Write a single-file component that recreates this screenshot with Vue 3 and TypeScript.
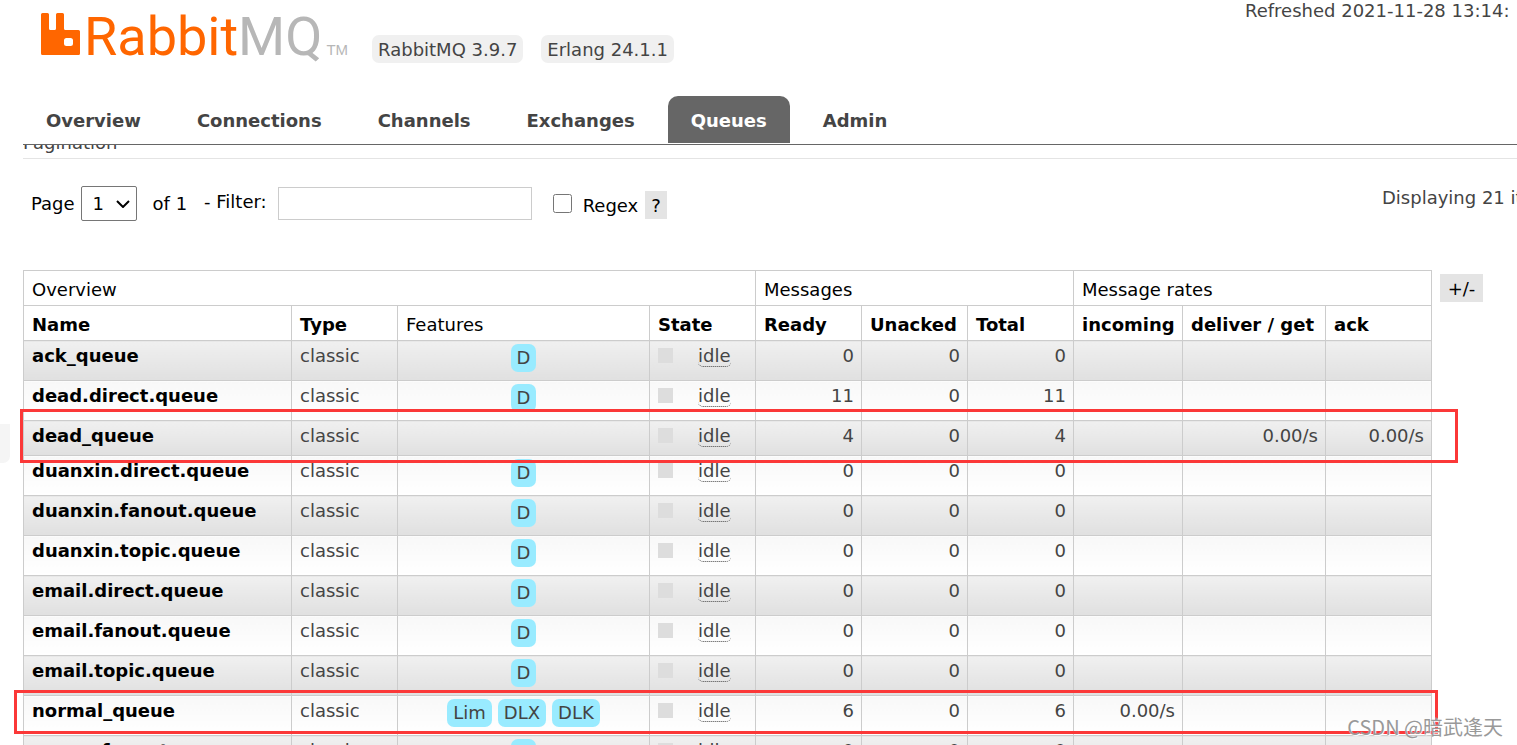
<script setup lang="ts">
import { ref } from 'vue'

interface Queue {
  name: string
  features: string[]
  ready: number
  unacked: number
  total: number
  incoming?: string
  deliver?: string
  ack?: string
}

const tabs: string[] = ['Overview', 'Connections', 'Channels', 'Exchanges', 'Queues', 'Admin']
const activeTab = ref('Queues')
const page = ref('1')
const filter = ref('')
const regex = ref(false)

const durable = (name: string, count = 0): Queue => ({
  name,
  features: ['D'],
  ready: count,
  unacked: 0,
  total: count,
})

const queues: Queue[] = [
  durable('ack_queue'),
  durable('dead.direct.queue', 11),
  { name: 'dead_queue', features: [], ready: 4, unacked: 0, total: 4, deliver: '0.00/s', ack: '0.00/s' },
  durable('duanxin.direct.queue'),
  durable('duanxin.fanout.queue'),
  durable('duanxin.topic.queue'),
  durable('email.direct.queue'),
  durable('email.fanout.queue'),
  durable('email.topic.queue'),
  { name: 'normal_queue', features: ['Lim', 'DLX', 'DLK'], ready: 6, unacked: 0, total: 6, incoming: '0.00/s' },
  durable('queue.fanout'),
]
</script>

<template>
  <div class="page">
    <header class="header">
      <div class="brand">
        <a class="logo" href="#" aria-label="RabbitMQ">
          <svg class="mark" viewBox="0 0 39 42" aria-hidden="true">
            <path
              fill="#f60"
              fill-rule="evenodd"
              d="M1.5 0H6.5Q8 0 8 1.5V15.5Q8 17 9.5 17H13.5Q15 17 15 15.5V1.5Q15 0 16.5 0H21.5Q23 0 23 1.5V15.5Q23 17 24.5 17H37.5Q39 17 39 18.5V40.5Q39 42 37.5 42H1.5Q0 42 0 40.5V1.5Q0 0 1.5 0ZM25.5 25Q23 25 23 27.5V30.5Q23 33 25.5 33H29.5Q32 33 32 30.5V27.5Q32 25 29.5 25Z"
            />
          </svg>
          <span class="word">Rabbit<span class="mq">MQ</span></span>
          <span class="tm">TM</span>
        </a>
        <span class="version">RabbitMQ 3.9.7</span>
        <span class="version">Erlang 24.1.1</span>
        <span class="refreshed">Refreshed 2021-11-28 13:14:</span>
      </div>
      <nav class="tabs">
        <a
          v-for="tab in tabs"
          :key="tab"
          href="#"
          class="tab"
          :class="{ active: tab === activeTab }"
          @click.prevent="activeTab = tab"
          >{{ tab }}</a
        >
      </nav>
    </header>

    <main class="main">
      <h2 class="section">Pagination</h2>

      <form class="filters" @submit.prevent>
        <label for="page">Page</label>
        <span class="select">
          <select id="page" v-model="page">
            <option>1</option>
          </select>
          <svg viewBox="0 0 14 8" aria-hidden="true">
            <path d="M1 1L7 7L13 1" fill="none" stroke="#000" stroke-width="2" />
          </svg>
        </span>
        <span class="pages">of 1</span>
        <label class="filter-label" for="filter">- Filter:</label>
        <input id="filter" v-model="filter" class="filter" type="text" />
        <input id="regex" v-model="regex" class="check" type="checkbox" />
        <label class="regex-label" for="regex">Regex</label>
        <button class="chip help" type="button">?</button>
        <span class="displaying">Displaying 21 items</span>
      </form>

      <div class="listing">
        <table class="list">
          <colgroup>
            <col class="c-name" />
            <col class="c-std" />
            <col class="c-features" />
            <col class="c-std" span="4" />
            <col class="c-incoming" />
            <col class="c-deliver" />
            <col class="c-std" />
          </colgroup>
          <thead>
            <tr>
              <th class="plain" colspan="4">Overview</th>
              <th class="plain" colspan="3">Messages</th>
              <th class="plain" colspan="3">Message rates</th>
            </tr>
            <tr>
              <th>Name</th>
              <th>Type</th>
              <th class="plain">Features</th>
              <th>State</th>
              <th>Ready</th>
              <th>Unacked</th>
              <th>Total</th>
              <th>incoming</th>
              <th>deliver / get</th>
              <th>ack</th>
            </tr>
          </thead>
          <tbody>
            <tr v-for="q in queues" :key="q.name">
              <td><a class="name" href="#">{{ q.name }}</a></td>
              <td>classic</td>
              <td class="features">
                <div v-if="q.features.length" class="badges">
                  <span v-for="f in q.features" :key="f" class="badge">{{ f }}</span>
                </div>
              </td>
              <td>
                <div class="state"><span class="light"></span><abbr>idle</abbr></div>
              </td>
              <td class="num">{{ q.ready }}</td>
              <td class="num">{{ q.unacked }}</td>
              <td class="num">{{ q.total }}</td>
              <td class="num">{{ q.incoming }}</td>
              <td class="num">{{ q.deliver }}</td>
              <td class="num">{{ q.ack }}</td>
            </tr>
          </tbody>
        </table>
        <button class="chip" type="button">+/-</button>
        <div class="marker marker-dead"></div>
        <div class="marker marker-normal"></div>
        <div class="side-tab"></div>
      </div>
    </main>
    <div class="watermark">CSDN @暗武逢天</div>
  </div>
</template>

<style>
body {
  background: #fff;
}
</style>

<style scoped>
.page {
  position: relative;
  display: flex;
  flex-direction: column;
  height: 100vh;
  overflow: hidden;
  color: #444;
  font: 18px/22px Verdana, "DejaVu Sans", sans-serif;
}
.page *,
.page {
  box-sizing: border-box;
}
.header {
  flex: none;
  margin-left: 23px;
  border-bottom: 1px solid #666;
}
.brand {
  display: flex;
  align-items: flex-start;
  height: 96px;
  padding-left: 18px;
}
.logo {
  display: flex;
  align-items: flex-start;
  margin-right: 24px;
  color: #b7b7b7;
  text-decoration: none;
}
.mark {
  width: 39px;
  height: 42px;
  margin-top: 13px;
}
.word {
  margin-left: 4px;
  color: #f60;
  font: 54px/73px Roboto, sans-serif;
}
.mq {
  color: #b7b7b7;
}
.tm {
  margin: 41px 0 0 4px;
  font: 15px/18px "Liberation Sans", Arial, sans-serif;
}
.version {
  margin: 35px 18px 0 0;
  padding: 4px 6px 2px;
  border-radius: 7px;
  background: #f0f0f0;
  white-space: nowrap;
}
.refreshed {
  width: 272px;
  margin-left: auto;
  overflow: hidden;
  white-space: nowrap;
}
.tabs {
  display: flex;
  gap: 10px;
  padding: 0 0 1px;
}
.tab {
  padding: 14px 23px 11px;
  border-radius: 10px 10px 0 0;
  color: #444;
  font-weight: bold;
  text-decoration: none;
}
.tab.active {
  background: #666;
  color: #fff;
}
.main {
  flex: 1;
  min-height: 0;
  overflow: hidden;
  padding-left: 23px;
}
.section {
  margin: -13px 0 0;
  padding-bottom: 4px;
  border-bottom: 1px solid #e4e4e4;
  font-size: 18px;
  font-weight: normal;
}
.filters {
  display: flex;
  align-items: center;
  height: 35px;
  margin: 27px 0 49px;
  padding-left: 8px;
  color: #000;
  white-space: nowrap;
}
.select {
  position: relative;
  width: 56px;
  height: 35px;
  margin-left: 6px;
}
.select select {
  width: 100%;
  height: 100%;
  padding: 0 11px;
  appearance: none;
  border: 1px solid #767676;
  border-radius: 2px;
  background: #fff;
  color: #000;
  font: inherit;
}
.select svg {
  position: absolute;
  top: 14px;
  right: 7px;
  width: 14px;
  height: 8px;
  pointer-events: none;
}
.pages {
  margin-left: 16px;
}
.filter-label {
  margin-left: 17px;
  padding-bottom: 4px;
}
.filter {
  width: 254px;
  height: 33px;
  margin-left: 11px;
  padding: 4px;
  border: 1px solid #ccc;
  font: inherit;
}
.check {
  width: 19px;
  height: 19px;
  margin: 0 11px 0 21px;
}
.regex-label {
  padding-top: 4px;
}
.chip {
  flex: none;
  height: 28px;
  padding: 1px 6px 0;
  border: 0;
  background: #e4e4e4;
  color: #000;
  font: inherit;
}
.help {
  margin: 3px 0 0 7px;
}
.displaying {
  width: 135px;
  height: 33px;
  margin-left: auto;
  overflow: hidden;
  color: #444;
}
.listing {
  position: relative;
  display: flex;
  align-items: flex-start;
  gap: 8px;
  padding-right: 34px;
}
.listing > .chip {
  min-width: 43px;
  margin-top: 4px;
}
.list {
  flex: 1;
  width: 100%;
  min-width: 0;
  table-layout: fixed;
  border-collapse: collapse;
}
.c-name {
  width: 268px;
}
.c-std {
  width: 106px;
}
.c-features {
  width: 252px;
}
.c-incoming {
  width: 109px;
}
.c-deliver {
  width: 143px;
}
th,
td {
  border: 1px solid #ccc;
  text-align: left;
  vertical-align: top;
  white-space: nowrap;
}
th {
  padding: 8px 8px 4px;
  color: #000;
}
.plain {
  font-weight: normal;
}
td {
  padding: 4px 8px 8px;
}
tbody tr:nth-child(odd) td {
  background: linear-gradient(#f0f0f0, #e0e0e0);
}
tbody tr:nth-child(even) td {
  background: linear-gradient(#f8f8f8, #fff);
}
.name {
  color: #000;
  font-weight: bold;
  text-decoration: none;
}
.features {
  padding-top: 3px;
}
.badges {
  display: flex;
  justify-content: center;
  gap: 6px;
}
.badge {
  padding: 3px 6px;
  border-radius: 7px;
  background: #99ebff;
}
.state {
  display: flex;
  align-items: flex-start;
}
.light {
  width: 15px;
  height: 15px;
  margin: 3px 25px 0 0;
  background: #ddd;
}
abbr {
  border-bottom: 1px dotted #444;
  border-radius: 5px;
  line-height: 21px;
}
.num {
  padding-right: 7px;
  text-align: right;
}
.marker {
  position: absolute;
  border: 3px solid #fb3838;
  pointer-events: none;
}
.marker-dead {
  top: 139px;
  right: 59px;
  left: -3px;
  height: 54px;
}
.marker-normal {
  top: 420px;
  right: 79px;
  left: -9px;
  height: 44px;
}
.side-tab {
  position: absolute;
  top: 154px;
  left: -23px;
  width: 10px;
  height: 39px;
  border-radius: 0 0 7px 0;
  background: #f5f5f5;
}
.watermark {
  position: absolute;
  right: 14px;
  bottom: 4px;
  color: #999;
  font: 20px/28px "Noto Sans CJK SC", sans-serif;
  text-shadow: 1px 1px 1px #fff;
}
</style>
